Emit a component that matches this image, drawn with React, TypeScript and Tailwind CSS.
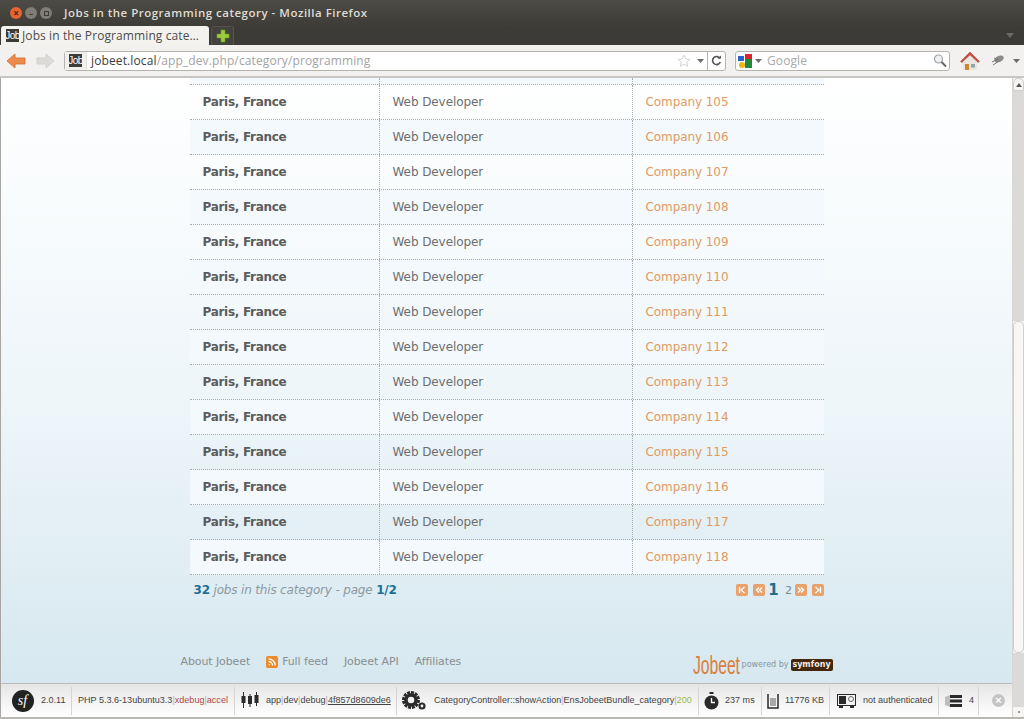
const ROWS = [105, 106, 107, 108, 109, 110, 111, 112, 113, 114, 115, 116, 117, 118]

const UI_FONT = 'font-["Open_Sans","Noto_Sans",sans-serif]'

function JobFavicon({ className }: { className: string }) {
  return (
    <span className={`flex items-center justify-center overflow-hidden bg-[#3c3b37] text-white font-["Liberation_Sans_Narrow","Liberation_Sans",sans-serif] text-[10px] leading-none tracking-[-0.6px] ${className}`}>
      Job
    </span>
  )
}

function PagerIcon({ d }: { d: string }) {
  return (
    <span className="flex h-[12px] w-[12px] items-center justify-center rounded-[2px] bg-[#eaa26c]">
      <svg width="8" height="8" viewBox="0 0 8 8" fill="none" stroke="#fff" strokeWidth="1.3">
        <path d={d} />
      </svg>
    </span>
  )
}

function ToolbarItem({ children, className = '' }: { children: React.ReactNode; className?: string }) {
  return (
    <div className={`flex h-[28px] shrink-0 items-center whitespace-nowrap border-r border-[#d4d4d4] ${className}`}>{children}</div>
  )
}

function Sep() {
  return <span className="text-[#b0b0b0]">|</span>
}

export default function App() {
  return (
    <div className={`flex h-[719px] w-[1024px] flex-col overflow-hidden bg-[#3c3b37] ${UI_FONT}`}>
      {/* Title bar */}
      <div className="flex h-[26px] shrink-0 items-center bg-gradient-to-b from-[#4d4b45] to-[#3e3c37] pl-[10px]">
        <div className="flex items-center gap-[3px]">
          <span className="flex h-[12px] w-[12px] items-center justify-center rounded-full bg-[#e5642f] text-[10px] font-bold leading-none text-[#4a2a18]">×</span>
          <span className="flex h-[12px] w-[12px] items-center justify-center rounded-full bg-[#7f7d76] text-[9px] font-bold leading-none text-[#3c3b37]">–</span>
          <span className="flex h-[12px] w-[12px] items-center justify-center rounded-full bg-[#7f7d76]">
            <span className="h-[5px] w-[5px] border border-[#3c3b37]" />
          </span>
        </div>
        <span className="ml-[12px] text-[11.5px] font-semibold tracking-[0.5px] text-[#dfdbd2]">
          Jobs in the Programming category - Mozilla Firefox
        </span>
      </div>

      {/* Tab bar */}
      <div className="flex h-[19px] shrink-0 items-end bg-[#3c3b37] pl-[1px]">
        <div className="flex h-[19px] w-[208px] items-center gap-[3px] rounded-t-[3px] bg-[#f4f2ee] pl-[5px] text-[#4c4c4c]">
          <JobFavicon className="h-[13px] w-[13px]" />
          <span className="text-[12px] tracking-[0.1px]">Jobs in the Programming cate…</span>
        </div>
        <div className="ml-[2px] flex h-[19px] w-[23px] items-center justify-center rounded-t-[3px] border border-b-0 border-[#55534d] bg-[#44423d]">
          <svg width="14" height="14" viewBox="0 0 14 14">
            <path d="M5 1h4v4h4v4H9v4H5V9H1V5h4z" fill="#9ccb3d" stroke="#6f9a25" strokeWidth="0.6" />
          </svg>
        </div>
        <div className="flex h-full flex-1 items-center justify-end pr-[10px]">
          <svg width="8" height="5" viewBox="0 0 8 5"><path d="M0 0h8L4 5z" fill="#6b6963" /></svg>
        </div>
      </div>

      {/* Nav bar */}
      <div className="flex h-[33px] shrink-0 items-center border-b-2 border-[#c8c6c2] bg-[#f2f1ef]">
        <svg className="ml-[6px]" width="20" height="16" viewBox="0 0 20 16">
          <path d="M9 1 1 8l8 7v-4h10V5H9z" fill="#ee8b4c" stroke="#cf6a2c" strokeWidth="0.8" />
        </svg>
        <svg className="ml-[10px]" width="19" height="16" viewBox="0 0 19 16">
          <path d="M10 1l8 7-8 7v-4H1V5h9z" fill="#dcdbd8" stroke="#cfcdca" strokeWidth="0.8" />
        </svg>
        <div className="ml-[9px] flex h-[20px] w-[662px] items-center rounded-[3px] border border-[#b5b3ae] bg-white">
          <div className="flex h-full w-[22px] items-center justify-center border-r border-[#e2e0dc] bg-[#f1f0ee]">
            <JobFavicon className="h-[13px] w-[13px]" />
          </div>
          <span className="ml-[4px] text-[12px] tracking-[0.12px] text-[#3c3c3c]">jobeet.local</span>
          <span className="text-[12px] tracking-[0.12px] text-[#a3a3a3]">/app_dev.php/category/programming</span>
          <div className="ml-auto flex h-full items-center">
            <svg width="14" height="14" viewBox="0 0 14 14" fill="none" stroke="#d5d5d5">
              <path d="M7 1.2l1.8 3.8 4 .5-3 2.7.9 4.1L7 10.2l-3.700 2.100.9-4.100-3-2.700 4-.5z" />
            </svg>
            <svg className="ml-[6px]" width="7" height="4" viewBox="0 0 7 4"><path d="M0 0h7L3.500 4z" fill="#6d6d6d" /></svg>
            <div className="ml-[3px] flex h-full w-[18px] items-center justify-center border-l border-[#b5b3ae]">
              <svg width="11" height="11" viewBox="0 0 11 11" fill="none" stroke="#555" strokeWidth="1.600">
                <path d="M9 3.500A4 4 0 1 0 9.300 7" />
                <path d="M6.500 3.500H10V0.500" fill="#555" stroke="none" />
              </svg>
            </div>
          </div>
        </div>
        <div className="ml-[9px] flex h-[20px] w-[215px] items-center rounded-[3px] border border-[#b5b3ae] bg-white">
          <svg className="ml-[2px]" width="14" height="14" viewBox="0 0 14 14">
            <rect x="7" y="0" width="7" height="5" fill="#d8262c" />
            <rect x="7" y="5" width="7" height="9" fill="#1f8a3a" />
            <rect x="0" y="2" width="6" height="5" fill="#2e62c8" />
            <rect x="1" y="8" width="6" height="6" rx="3" fill="#f1b712" />
          </svg>
          <svg className="ml-[3px]" width="7" height="4" viewBox="0 0 7 4"><path d="M0 0h7L3.500 4z" fill="#6d6d6d" /></svg>
          <span className="ml-[5px] text-[12px] tracking-[0.1px] text-[#a9a9a9]">Google</span>
          <svg className="ml-auto mr-[1px]" width="16" height="16" viewBox="0 0 16 16" fill="none">
            <circle cx="6.500" cy="6" r="4" fill="#eef1f3" stroke="#a3a3a3" strokeWidth="1.200" />
            <path d="M9.500 9l4.500 4.500" stroke="#666" strokeWidth="2" />
          </svg>
        </div>
        <svg className="ml-[10px]" width="20" height="20" viewBox="0 0 20 20">
          <path d="M10 1 0.500 10.500l1.500 1L10 4l8 7.500 1.500-1z" fill="#c94b45" stroke="#a93a35" strokeWidth="0.500" />
          <path d="M3 11l7-6.500 7 6.500v8H3z" fill="#e9e6df" />
          <rect x="5" y="13" width="4" height="6" fill="#c98a2a" />
          <rect x="11" y="13" width="4" height="3.500" fill="#8fa3b3" />
        </svg>
        <svg className="ml-[11px]" width="14" height="11" viewBox="0 0 14 11">
          <ellipse cx="8" cy="4" rx="5" ry="3" fill="#8a8a8a" transform="rotate(-25 8 4)" />
          <path d="M1 7l6-3M2 10l6-4M3 3l4 2" stroke="#777" strokeWidth="1" />
        </svg>
        <svg className="ml-[8px]" width="7" height="4" viewBox="0 0 7 4"><path d="M0 0h7L3.500 4z" fill="#6d6d6d" /></svg>
      </div>

      {/* Page + scrollbar */}
      <div className="flex min-h-0 flex-1 bg-white">
        <div className="flex min-w-0 flex-1 flex-col border-l border-[#a8a6a2] bg-gradient-to-b from-white to-[#d4e6ef] via-[#eef6f9] font-['DejaVu_Sans',sans-serif]">
          <div className="mx-auto w-[634px]">
            <div className="grid h-[7px] grid-cols-[190px_253px_1fr] border-b border-dotted border-[#a3aeb4] bg-[#f3f9fc]">
              <div className="border-r border-dotted border-[#a3aeb4]" />
              <div className="border-r border-dotted border-[#a3aeb4]" />
              <div />
            </div>
            {ROWS.map((n) => (
              <div
                key={n}
                className={`grid h-[35px] grid-cols-[190px_253px_1fr] border-b border-dotted border-[#a3aeb4] text-[12px] ${n % 2 === 0 ? 'bg-[#f3f9fc]' : ''}`}
              >
                <div className="flex items-center border-r border-dotted border-[#a3aeb4] pl-[13px] font-bold tracking-[-0.3px] text-[#5c5c5c]">
                  Paris, France
                </div>
                <div className="flex items-center border-r border-dotted border-[#a3aeb4] pl-[13px] tracking-[-0.08px] text-[#6e6e6e]">
                  Web Developer
                </div>
                <div className="flex items-center pl-[13px] tracking-[-0.08px] text-[#e09a63]">Company {n}</div>
              </div>
            ))}
            <div className="mt-[8px] flex h-[14px] items-center justify-between text-[12px] tracking-[-0.17px]">
              <div className="pl-[4px] italic text-[#8c9aa2]">
                <strong className="not-italic text-[#1f6f95]">32</strong> jobs in this category - page{' '}
                <strong className="not-italic text-[#1f6f95]">1/2</strong>
              </div>
              <div className="flex items-center">
                <PagerIcon d="M1.500 1v6M6.500 1L3 4l3.500 3" />
                <span className="w-[5px]" />
                <PagerIcon d="M4 1.500L1.500 4 4 6.500M7 1.500L4.500 4 7 6.500" />
                <span className="flex w-[18px] justify-center text-[15px] font-bold leading-none text-[#1f6f95]">1</span>
                <span className="flex w-[12px] justify-center text-[11px] leading-none text-[#7d8b93]">2</span>
                <PagerIcon d="M1 1.500L3.500 4 1 6.500M4 1.500L6.500 4 4 6.500" />
                <span className="w-[5px]" />
                <PagerIcon d="M1.500 1L5 4 1.500 7M6.500 1v6" />
              </div>
            </div>
          </div>

          {/* Footer */}
          <div className="mx-auto mt-auto flex h-[29px] w-[652px] items-start text-[11px] tracking-[-0.1px] text-[#8a8f8f]">
            <span>About Jobeet</span>
            <span className="ml-[16px] flex items-center">
              <span className="mr-[4px] flex h-[12px] w-[12px] items-center justify-center rounded-[2px] bg-[#ee8a2c]">
                <svg width="8" height="8" viewBox="0 0 8 8" fill="none" stroke="#fff" strokeWidth="1.300">
                  <circle cx="1.300" cy="6.700" r="0.800" fill="#fff" stroke="none" />
                  <path d="M0.500 3.500A4 4 0 0 1 4.500 7.500M0.500 0.800A6.700 6.700 0 0 1 7.200 7.500" />
                </svg>
              </span>
              Full feed
            </span>
            <span className="ml-[16px]">Jobeet API</span>
            <span className="ml-[16px]">Affiliates</span>
            <div className="ml-auto flex items-center pt-[0px]">
              <span className="mr-[2px] block h-[22px] w-[47px]">
                <span className="block origin-left scale-x-[0.63] font-['Liberation_Sans',sans-serif] text-[25px] leading-[22px] text-[#d9803f]">
                  Jobeet
                </span>
              </span>
              <span className="text-[8px] tracking-[0px] text-[#8596a0]">powered by</span>
              <span className="ml-[2px] flex h-[12px] w-[42px] items-center justify-center rounded-[2px] bg-[#43260c] text-[8px] font-bold leading-none tracking-[0px] text-[#f1ece4]">
                symfony
              </span>
            </div>
          </div>

          {/* Debug toolbar */}
          <div className="flex h-[34px] shrink-0 items-center border-t border-[#bcbcbc] bg-gradient-to-b from-[#e6e6e6] to-white font-['Liberation_Sans',sans-serif] text-[9.05px] text-[#444]">
            <ToolbarItem className="w-[71px] pl-[11px]">
              <span className="flex h-[22px] w-[22px] items-center justify-center rounded-full bg-[#222] pr-[1px] font-['Liberation_Serif',serif] text-[14px] italic leading-none text-white">
                sf
              </span>
              <span className="ml-[7px]">2.0.11</span>
            </ToolbarItem>
            <ToolbarItem className="w-[163px] pl-[6px]">
              <span>
                PHP 5.3.6-13ubuntu3.3<Sep />
                <span className="text-[#b04848]">xdebug</span>
                <Sep />
                <span className="text-[#b04848]">accel</span>
              </span>
            </ToolbarItem>
            <ToolbarItem className="w-[162px] pl-[6px]">
              <svg width="18" height="17" viewBox="0 0 18 17" fill="#2a2a2a">
                <path d="M2 0h1v4h1.500v7H3v5H2v-5H.5V4H2z" />
                <path d="M8.500 2h1v2h1.500v8H9.500v3h-1v-3H7V4h1.500z" />
                <path d="M15 0h1v3h1.500v8H16v3h-1v-3h-1.500V3H15z" />
              </svg>
              <span className="ml-[7px]">
                app<Sep />dev<Sep />debug<Sep />
                <span className="underline">4f857d8609de6</span>
              </span>
            </ToolbarItem>
            <ToolbarItem className="w-[302px] pl-[5px]">
              <svg width="24" height="20" viewBox="0 0 24 20">
                <circle cx="9" cy="9" r="7.500" fill="none" stroke="#2a2a2a" strokeWidth="3" strokeDasharray="3 0.900" />
                <circle cx="9" cy="9" r="5" fill="none" stroke="#2a2a2a" strokeWidth="3.500" />
                <circle cx="20" cy="15" r="2.500" fill="none" stroke="#2a2a2a" strokeWidth="2.200" />
              </svg>
              <span className="ml-[8px]">
                CategoryController::showAction<Sep />EnsJobeetBundle_category
                <Sep />
                <span className="text-[#9ab84a]">200</span>
              </span>
            </ToolbarItem>
            <ToolbarItem className="w-[63px] pl-[5px]">
              <svg width="15" height="18" viewBox="0 0 15 18">
                <rect x="5.500" y="0" width="4" height="2" fill="#2a2a2a" />
                <circle cx="7.500" cy="10.500" r="7" fill="#2a2a2a" />
                <path d="M7.500 6v4.500H11" fill="none" stroke="#fff" strokeWidth="1.300" />
              </svg>
              <span className="ml-[6px]">237 ms</span>
            </ToolbarItem>
            <ToolbarItem className="w-[68px] pl-[5px]">
              <svg width="12" height="16" viewBox="0 0 12 16">
                <path d="M1 1v14h10V1" fill="none" stroke="#2a2a2a" strokeWidth="1.500" />
                <rect x="3" y="5" width="6" height="8" fill="#a8a8a8" />
              </svg>
              <span className="ml-[6px]">11776 KB</span>
            </ToolbarItem>
            <ToolbarItem className="w-[109px] pl-[7px]">
              <svg width="19" height="14" viewBox="0 0 19 14">
                <rect x="0.500" y="0.500" width="18" height="11" fill="#f4f4f4" stroke="#2a2a2a" />
                <rect x="2" y="2" width="7" height="8" fill="#2a2a2a" />
                <circle cx="14" cy="5" r="2.500" fill="none" stroke="#666" />
                <path d="M2 12v2h4v-2M13 12v2h4v-2" fill="#2a2a2a" />
              </svg>
              <span className="ml-[7px]">not authenticated</span>
            </ToolbarItem>
            <ToolbarItem className="w-[40px] pl-[6px]">
              <svg width="17" height="14" viewBox="0 0 17 14" fill="#2a2a2a">
                <path d="M0 3l5-2v12l-5-2z" fill="#bdbdbd" />
                <rect x="5" y="1" width="12" height="3" />
                <rect x="5" y="5.500" width="12" height="3" />
                <rect x="5" y="10" width="12" height="3" />
              </svg>
              <span className="ml-[7px]">4</span>
            </ToolbarItem>
            <div className="ml-[13px] flex h-[13px] w-[13px] items-center justify-center rounded-full bg-[#c4c4c4] text-[11px] font-bold leading-none text-white">
              ×
            </div>
          </div>
        </div>

        {/* Scrollbar */}
        <div className="flex w-[12px] shrink-0 flex-col border-l border-[#d8d6d3] bg-[#f3f2f0]">
          <div className="flex h-[13px] shrink-0 items-center justify-center rounded-t-[5px] border border-[#d0cecb] bg-[#f6f5f3]">
            <svg width="6" height="4" viewBox="0 0 6 4"><path d="M3 0l3 4H0z" fill="#555" /></svg>
          </div>
          <div className="h-[230px] shrink-0 bg-[#dcdad8]" />
          <div className="h-[332px] shrink-0 rounded-[5px] border border-[#d0cecb] bg-[#f8f7f6]" />
          <div className="min-h-0 flex-1 bg-[#dcdad8]" />
          <div className="flex h-[10px] shrink-0 items-center justify-center bg-[#f6f5f3]">
            <span className="h-[2px] w-[2px] bg-[#999]" />
          </div>
        </div>
      </div>
      <div className="h-[2px] shrink-0 bg-[#b9b7b2]" />
    </div>
  )
}
